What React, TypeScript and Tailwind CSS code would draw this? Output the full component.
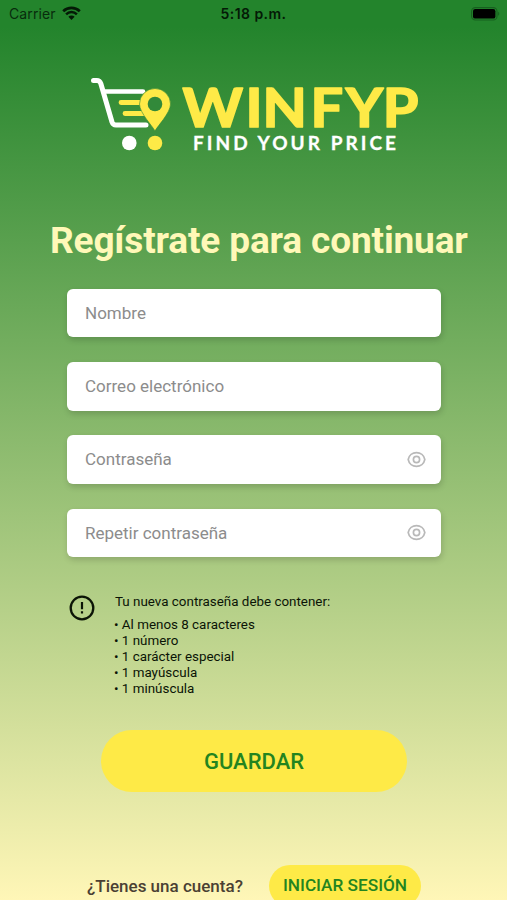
import { ReactNode } from "react";

const fields = [
  { label: "Nombre", secret: false },
  { label: "Correo electrónico", secret: false },
  { label: "Contraseña", secret: true },
  { label: "Repetir contraseña", secret: true },
];

const rules = [
  "Al menos 8 caracteres",
  "1 número",
  "1 carácter especial",
  "1 mayúscula",
  "1 minúscula",
];

function StatusBar() {
  return (
    <div className="grid h-7 grid-cols-3 items-center pl-[9px] pr-[7px] font-['Inter',sans-serif] text-[14px] text-[#082c0c]">
      <div className="-mt-px flex items-center gap-[6px]">
        <span className="tracking-[0.1px]">Carrier</span>
        <svg className="-mt-px" width="19" height="15" viewBox="0 0 19 15" fill="none">
          <path d="M1.2 5.2a12 12 0 0 1 16.6 0" stroke="#041a06" strokeWidth="2.7" />
          <path d="M4.1 8.3a7.7 7.7 0 0 1 10.8 0" stroke="#041a06" strokeWidth="2.5" />
          <path d="M6.4 10.7a4.4 4.4 0 0 1 6.2 0L9.5 14z" fill="#041a06" />
        </svg>
      </div>
      <span className="-ml-[2px] -mt-px whitespace-nowrap text-center font-semibold tracking-[0.45px] text-[#041a06]">
        5:18 p.m.
      </span>
      <svg className="-mt-px justify-self-end" width="29" height="14" viewBox="0 0 29 14">
        <rect x="0.6" y="0.6" width="25.4" height="12.4" rx="3.8" fill="none" stroke="#17601f" strokeWidth="1.1" />
        <rect x="2" y="2" width="22.4" height="9.6" rx="2.2" fill="#000" />
        <path d="M27.2 4.8c1.4.6 1.4 3.4 0 4z" fill="#17601f" />
      </svg>
    </div>
  );
}

function Logo() {
  return (
    <svg className="mx-auto mt-[44px] block" width="331" height="84" viewBox="88 72 331 84">
      <g fill="none" stroke="#fff" strokeLinecap="round" strokeLinejoin="round">
        <path d="M93.500 80.500h3.300q3 0 4 3l11.200 38.500q1 3 4 3h30" strokeWidth="5" />
        <path d="M105 91.500h38" strokeWidth="4.600" />
      </g>
      <path d="M121 102.500h22M125 113.500h22" stroke="#feea47" strokeWidth="4.800" strokeLinecap="round" />
      <path
        d="M155 131c-2-4.500-15.500-18-15.500-27a15.500 15.500 0 0 1 31 0c0 9-13.500 22.500-15.500 27z"
        fill="#feea47"
        stroke="#32893a"
        strokeWidth="0.600"
      />
      <circle cx="155" cy="104" r="7.300" fill="#32893a" />
      <circle cx="129.300" cy="143" r="7.300" fill="#fff" />
      <circle cx="155" cy="143" r="7.300" fill="#feea47" />
      <text
        x="169 227.400 243.100 287.600 320.200 354.300"
        y="127.200"
        transform="scale(1.08 1)"
        className="font-['Lato',sans-serif] text-[53.300px] font-bold"
        fill="#feea47"
        stroke="#feea47"
        strokeWidth="1.700"
        strokeLinejoin="round"
      >
        WINFYP
      </text>
      <text
        x="193"
        y="149.800"
        className="font-['Lato',sans-serif] text-[19px] font-bold"
        fill="#fff"
        stroke="#fff"
        strokeWidth="0.300"
        textLength="203"
      >
        FIND YOUR PRICE
      </text>
    </svg>
  );
}

function EyeIcon() {
  return (
    <svg width="19" height="17" viewBox="0 0 19 17" fill="none" stroke="#b9b9b9" strokeWidth="1.7">
      <path d="M1.200 8.500C2 4.200 5.600 1.600 9.500 1.600s7.500 2.600 8.300 6.900c-.8 4.300-4.400 6.900-8.300 6.900S2 12.800 1.200 8.500z" strokeLinejoin="round" />
      <circle cx="9.500" cy="8.500" r="3.100" />
    </svg>
  );
}

function Field({ label, children }: { label: string; children?: ReactNode }) {
  return (
    <div className="flex h-[48.700px] items-center justify-between rounded-md bg-white pl-[18px] pr-[15px] text-[17px] text-[#8c8c8c] shadow-[1px_3px_6px_rgba(0,0,0,0.16)]">
      <span className="pt-px">{label}</span>
      {children}
    </div>
  );
}

export default function App() {
  return (
    <div className="h-[900px] w-full overflow-hidden bg-[linear-gradient(#23842c_3%,#fff6b7)] font-['Roboto',sans-serif]">
      <StatusBar />
      <Logo />
      <h1 className="ml-[50px] mt-[63px] whitespace-nowrap text-[37px] font-bold leading-[44px] tracking-[-0.15px] text-[#fff8b8]">
        Regístrate para continuar
      </h1>
      <div className="ml-[67px] mt-[25.700px] flex w-[374px] flex-col gap-[24.600px]">
        {fields.map((field) => (
          <Field key={field.label} label={field.label}>
            {field.secret && <EyeIcon />}
          </Field>
        ))}
      </div>

      {/* Password rules */}
      <div className="ml-[69px] mt-[37px] flex gap-[20px] text-[13.400px] leading-[16px] text-[#0b1406]">
        <svg className="mt-px" width="26" height="26" viewBox="0 0 26 26">
          <circle cx="13" cy="13" r="11.300" fill="none" stroke="#0b1406" strokeWidth="2.300" />
          <path d="M11.900 7h2.200v7.300h-2.200zM11.900 16.300h2.200v2.300h-2.200z" fill="#0b1406" />
        </svg>
        <div>
          <p className="mb-[7px]">Tu nueva contraseña debe contener:</p>
          <ul className="-ml-px">
            {rules.map((rule) => (
              <li key={rule}>• {rule}</li>
            ))}
          </ul>
        </div>
      </div>

      <button className="ml-[101px] mt-[33px] block h-[62px] w-[306px] rounded-full bg-[#feea47] text-[22px] font-medium text-[#23841f]">
        GUARDAR
      </button>

      <div className="ml-[87px] mt-[73px] flex w-[334px] items-center justify-between text-[17px] font-medium">
        <span className="pt-px text-[#4a4033]">¿Tienes una cuenta?</span>
        <button className="h-[42px] w-[152px] whitespace-nowrap rounded-full bg-[#feea47] text-[17.200px] text-[#23841f]">
          INICIAR SESIÓN
        </button>
      </div>
    </div>
  );
}
